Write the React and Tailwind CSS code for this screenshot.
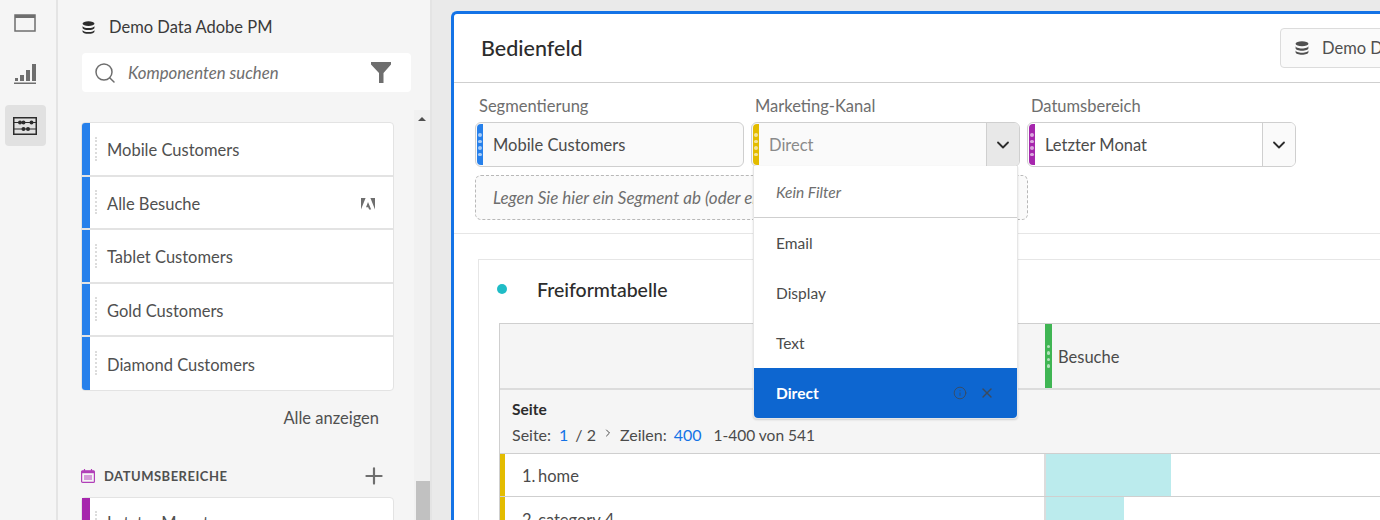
import React from 'react';
import { Search, ChevronDown, ChevronRight, Plus, X, Info } from 'lucide-react';

const Database = ({ className }) => (
    <svg viewBox="0 0 14 14" className={className} fill="currentColor">
        <ellipse cx="7" cy="2.8" rx="6.4" ry="2.5" />
        <path d="M.6 5c0 1.4 2.9 2.5 6.4 2.5S13.4 6.4 13.4 5v2.2c0 1.4-2.9 2.5-6.4 2.5S.6 8.6.6 7.2z" />
        <path d="M.6 9.3c0 1.4 2.9 2.5 6.4 2.5s6.4-1.1 6.4-2.5v1.9c0 1.4-2.9 2.5-6.4 2.5S.6 12.6.6 11.2z" />
    </svg>
);

const PanelIcon = () => (
    <svg viewBox="0 0 22 18" className="w-[22px] h-[18px]" fill="none" stroke="#6e6e6e">
        <rect x="1" y="1" width="20" height="16" strokeWidth="1.5" />
        <rect x="1" y="1" width="20" height="3" fill="#6e6e6e" stroke="none" />
    </svg>
);

const ChartIcon = () => (
    <svg viewBox="0 0 22 20" className="w-[22px] h-[20px]" fill="#6e6e6e">
        <rect x="1" y="14" width="3" height="3" />
        <rect x="6" y="11" width="4" height="6" />
        <rect x="12" y="6" width="4" height="11" />
        <rect x="18" y="0" width="4" height="17" />
        <rect x="0" y="18.5" width="22" height="1.5" />
    </svg>
);

const ComponentsIcon = () => (
    <svg viewBox="0 0 24 18" className="w-[24px] h-[18px]" fill="#2c2c2c">
        <path d="M0 0h24v18H0zM1.5 1.5v15h21v-15z" fillRule="evenodd" />
        <rect x="1" y="5" width="22" height="1" />
        <rect x="1" y="11.5" width="22" height="1" />
        <circle cx="7" cy="5.5" r="2" />
        <circle cx="10.5" cy="5.5" r="2" />
        <circle cx="18.5" cy="5.5" r="2" />
        <circle cx="10.5" cy="12" r="2" />
        <circle cx="15" cy="12" r="2" />
    </svg>
);

const FilterIcon = () => (
    <svg viewBox="0 0 20 21" className="w-[20px] h-[21px]" fill="#6e6e6e">
        <path d="M0 0h20v2.5L12.5 11v10h-4.5V11L0 2.5z" />
    </svg>
);

const AdobeIcon = () => (
    <svg viewBox="0 0 14 12" className="w-[14px] h-[12px]" fill="#6e6e6e">
        <path d="M0 0h4.6L0 11.5zM9.4 0H14v11.5zM7 4l3.2 7.5H8.1L7.2 9.2H5z" />
    </svg>
);

const CalendarIcon = () => (
    <svg viewBox="0 0 14 14" className="w-[14px] h-[14px]" fill="none" stroke="#b13fb8">
        <rect x="0.6" y="1.8" width="12.8" height="11.6" rx="1" strokeWidth="1.2" />
        <rect x="0.6" y="1.8" width="12.8" height="2.4" fill="#b13fb8" stroke="none" />
        <path d="M3.5 0v2M10.5 0v2" strokeWidth="1.2" />
        <path d="M3 6h8v5H3z" fill="#d59ad9" stroke="none" />
    </svg>
);

const Dots = () => (
    <div className="flex flex-col gap-[3px]">
        {[0, 1, 2, 3].map((i) => (
            <span key={i} className="block w-[3.5px] h-[3.5px] rounded-full bg-white/60" />
        ))}
    </div>
);

const ComponentRow = ({ label, adobe, last }) => (
    <div className={`flex ${last ? 'h-[52.5px]' : 'h-[53.5px] border-b-2 border-[#e3e3e3]'}`}>
        <div className="w-[8px] bg-[#2680eb]" />
        <div className="flex flex-1 items-center pl-[5px] pr-[18px] pt-[3px]">
            <div className="h-[24px] border-l-2 border-dotted border-[#dcdcdc] mr-[10px] mb-[3px]" />
            <span className="flex-1 text-[#505050]">{label}</span>
            {adobe && <AdobeIcon />}
        </div>
    </div>
);

const Rail = () => (
    <div className="w-[58px] shrink-0 bg-[#f5f5f5] border-r-2 border-[#e4e4e4] flex flex-col items-center pt-[14px] pr-[6px]">
        <PanelIcon />
        <div className="mt-[32px]"><ChartIcon /></div>
        <div className="mt-[21px] w-[41px] h-[41px] rounded bg-[#e1e1e1] flex items-center justify-center">
            <ComponentsIcon />
        </div>
    </div>
);

const Sidebar = () => (
    <div className="w-[374px] shrink-0 bg-[#f5f5f5] border-r-2 border-[#e4e4e4] flex flex-col">
        <div className="flex items-center gap-[14px] pl-[24px] h-[53px] pt-[1px] text-[#2c2c2c]">
            <Database className="w-[13px] h-[13px]" />
            <span className="text-[#3a3a3a]">Demo Data Adobe PM</span>
        </div>
        <div className="ml-[24px] w-[329px] h-[39px] bg-white rounded flex items-center pl-[11px] pr-[20px]">
            <Search size={24} strokeWidth={1.5} className="text-[#6e6e6e]" />
            <span className="flex-1 ml-[11px] italic text-[16.8px] text-[#6e6e6e]">Komponenten suchen</span>
            <FilterIcon />
        </div>
        <div className="flex flex-1 mt-[18px] min-h-0">
            <div className="flex-1 pl-[23px] pr-[20px] pt-[12px]">
                <div className="border border-[#e3e3e3] rounded-sm bg-white overflow-hidden">
                    <ComponentRow label="Mobile Customers" />
                    <ComponentRow label="Alle Besuche" adobe />
                    <ComponentRow label="Tablet Customers" />
                    <ComponentRow label="Gold Customers" />
                    <ComponentRow label="Diamond Customers" last />
                </div>
                <div className="text-right pr-[15px] mt-[16px] text-[#505050]">Alle anzeigen</div>
                <div className="flex items-center mt-[36px] h-[22px]">
                    <CalendarIcon />
                    <span className="ml-[9px] flex-1 text-[13px] font-bold tracking-[0.5px] text-[#505050]">DATUMSBEREICHE</span>
                    <Plus size={26} strokeWidth={2} className="mr-[7px] text-[#6e6e6e]" />
                </div>
                <div className="mt-[10px] border border-[#e3e3e3] rounded-sm bg-white flex h-[53px]">
                    <div className="w-[8px] bg-[#a626ad]" />
                    <div className="flex items-center pl-[5px]">
                        <div className="h-[24px] border-l-2 border-dotted border-[#dcdcdc] mr-[10px]" />
                        <span className="text-[#505050]">Letzter Monat</span>
                    </div>
                </div>
            </div>
            <div className="w-[16px] bg-[#f1f1f1] relative">
                <div className="flex justify-center pt-[7px]">
                    <div className="w-0 h-0 border-x-[4px] border-x-transparent border-b-[4px] border-b-[#505050]" />
                </div>
                <div className="absolute left-[2px] right-0 top-[371px] h-[60px] bg-[#c1c1c1]" />
            </div>
        </div>
    </div>
);

const FilterBox = ({ label, color, value, muted, open, bg }) => (
    <div className="w-[269px] shrink-0">
        <div className="h-[20px] pl-[4px] leading-[20px] text-[#6e6e6e] text-[16.5px]">{label}</div>
        <div className={`mt-[6px] h-[45px] flex border border-[#cfcfcf] rounded-[6px] overflow-hidden ${bg}`}>
            <div className={`w-[6px] mx-[1px] my-[1px] rounded-l flex items-center justify-center shrink-0 ${color}`}>
                <Dots />
            </div>
            <span className={`flex-1 self-center pl-[9px] ${muted ? 'text-[#8a8a8a]' : 'text-[#4b4b4b]'}`}>{value}</span>
            {open !== undefined && (
                <div className={`w-[33px] border-l border-[#cfcfcf] flex items-center justify-center ${open ? 'bg-[#e8e8e8]' : 'bg-[#fafafa]'}`}>
                    <ChevronDown size={20} strokeWidth={2.2} className="text-[#2c2c2c]" />
                </div>
            )}
        </div>
    </div>
);

const Dropdown = () => (
    <div className="absolute left-[299px] top-[152px] w-[265px] bg-white rounded-b border border-t-0 border-[#e6e6e6] shadow-[0_1px_2px_rgba(0,0,0,0.15)] text-[15.5px] text-[#4b4b4b] z-10">
        <div className="h-[52px] flex items-center pl-[22px] italic border-b border-[#cfcfcf] text-[#6e6e6e]">Kein Filter</div>
        <div className="h-[50px] flex items-center pl-[22px]">Email</div>
        <div className="h-[50px] flex items-center pl-[22px]">Display</div>
        <div className="h-[50px] flex items-center pl-[22px]">Text</div>
        <div className="h-[50px] flex items-center pl-[22px] pr-[22px] bg-[#0d66d0] rounded-b text-white font-bold">
            <span className="flex-1">Direct</span>
            <Info size={14} strokeWidth={1.5} className="text-[#3b4a5e] mr-[12px]" />
            <X size={16} strokeWidth={2} className="text-[#3b4a5e]" />
        </div>
    </div>
);

const DataRow = ({ n, label, bar, tall }) => (
    <div className={`flex ${tall ? 'h-[44px]' : 'h-[43px]'} border-b border-[#cfcfcf]`}>
        <div className="w-[5px] bg-[#e3bc00]" />
        <div className="w-[539px] flex items-center pl-[17px] pt-[2px] text-[#4b4b4b]">
            <span className="w-[16px]">{n}.</span>
            <span>{label}</span>
        </div>
        <div className="flex-1 border-l-2 border-[#dcdcdc]">
            <div className="h-full bg-[#bbebed]" style={{ width: bar }} />
        </div>
    </div>
);

const TablePanel = () => (
    <div className="ml-[24px] mt-[25px] border border-[#e6e6e6] pl-[20px]">
        <div className="h-[63px] flex items-center relative pb-[3px]">
            <span className="absolute left-[-2px] top-[24px] w-[10px] h-[10px] rounded-full bg-[#1fbcc6]" />
            <span className="ml-[38px] text-[19.5px] font-medium text-[#2c2c2c]">Freiformtabelle</span>
        </div>
        <div className="border-l border-t border-[#cfcfcf]">
            <div className="h-[66px] flex bg-[#f5f5f5] border-b-2 border-[#dcdcdc]">
                <div className="w-[544px]" />
                <div className="w-[7px] ml-[1px] bg-[#3fb553] flex items-center justify-center"><Dots /></div>
                <span className="ml-[6px] self-center pt-[2px] text-[#4b4b4b]">Besuche</span>
            </div>
            <div className="h-[64px] bg-[#f5f5f5] border-b border-[#cfcfcf] pl-[12px] pt-[9px] text-[#4b4b4b]">
                <div className="font-bold text-[#2c2c2c] text-[15.5px] leading-[20px]">Seite</div>
                <div className="flex items-center mt-[6px] text-[16px] leading-[20px]">
                    <span>Seite:</span>
                    <span className="ml-[8px] text-[#1473e6]">1</span>
                    <span className="ml-[7px]">/ 2</span>
                    <ChevronRight size={12} strokeWidth={2} className="ml-[6px] mb-[4px]" />
                    <span className="ml-[6px]">Zeilen:</span>
                    <span className="ml-[7px] text-[#1473e6]">400</span>
                    <span className="ml-[12px] text-[15.5px]">1-400 von 541</span>
                </div>
            </div>
            <DataRow n={1} label="home" bar={125} />
            <DataRow n={2} label="category 4" bar={78} tall />
        </div>
    </div>
);

const Card = () => (
    <div className="relative w-[960px] h-[540px] bg-white rounded-tl-md border-l-[3px] border-t-[3px] border-[#1473e6]">
        <div className="h-[69px] border-b border-[#cfcfcf] flex items-center pl-[27px] relative">
            <span className="text-[21.5px] font-medium text-[#2c2c2c]">Bedienfeld</span>
            <div className="absolute left-[826px] top-[14px] w-[140px] h-[40px] border border-[#dcdcdc] rounded bg-[#fafafa] flex items-center pl-[14px] gap-[13px] text-[#505050]">
                <Database className="w-[14px] h-[14px]" />
                <span>Demo Data</span>
            </div>
        </div>
        <div className="h-[151px] border-b border-[#e6e6e6] pt-[13px] pl-[21px]">
            <div className="flex gap-[7px]">
                <FilterBox label="Segmentierung" color="bg-[#2680eb]" value="Mobile Customers" bg="bg-[#fafafa]" />
                <FilterBox label="Marketing-Kanal" color="bg-[#e3bc00]" value="Direct" muted open bg="bg-[#fafafa]" />
                <FilterBox label="Datumsbereich" color="bg-[#a626ad]" value="Letzter Monat" open={false} bg="bg-white" />
            </div>
            <div className="mt-[8px] w-[553px] h-[45px] border border-dashed border-[#b8b8b8] rounded-[6px] bg-[#fafafa] flex items-center pl-[17px] italic text-[17px] text-[#6e6e6e] overflow-hidden whitespace-nowrap">
                Legen Sie hier ein Segment ab (oder einen anderen Filter)
            </div>
        </div>
        <TablePanel />
        <Dropdown />
    </div>
);

export default function App() {
    return (
        <div className="w-[1380px] h-[520px] overflow-hidden flex bg-[#eaeaea] text-[16.5px] leading-[22px] font-['Lato',sans-serif]">
            <Rail />
            <Sidebar />
            <div className="flex-1 min-w-0 pl-[19px] pt-[11px]">
                <Card />
            </div>
        </div>
    );
}
